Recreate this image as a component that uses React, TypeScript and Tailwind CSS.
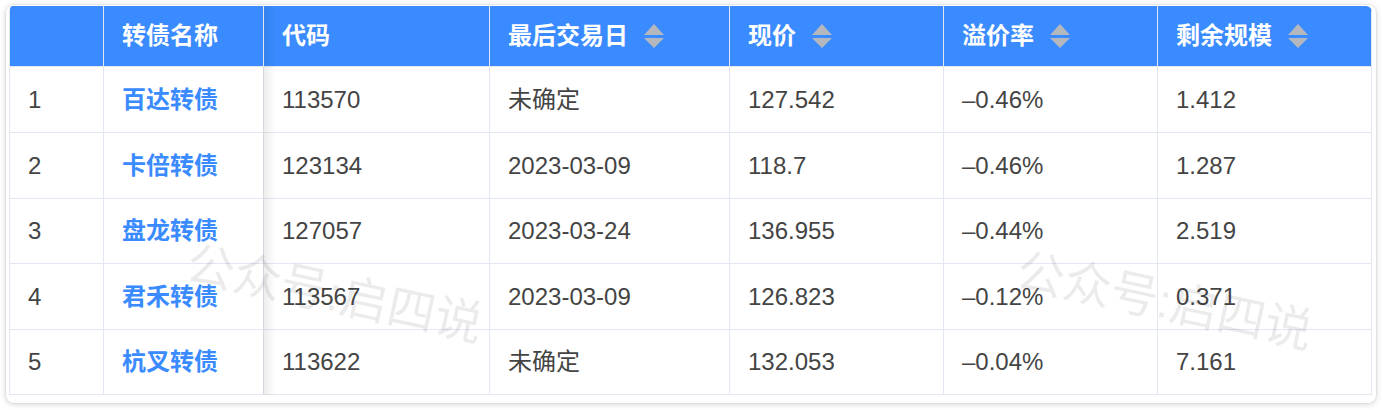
import React from "react";

const headers = [
  { label: "", sort: false },
  { label: "转债名称", sort: false },
  { label: "代码", sort: false },
  { label: "最后交易日", sort: true },
  { label: "现价", sort: true },
  { label: "溢价率", sort: true },
  { label: "剩余规模", sort: true },
];

const rows = [
  { name: "百达转债", code: "113570", last: "未确定", price: "127.542", premium: "–0.46%", size: "1.412", h: "h-[66px]" },
  { name: "卡倍转债", code: "123134", last: "2023-03-09", price: "118.7", premium: "–0.46%", size: "1.287", h: "h-[66px]" },
  { name: "盘龙转债", code: "127057", last: "2023-03-24", price: "136.955", premium: "–0.44%", size: "2.519", h: "h-[65px]" },
  { name: "君禾转债", code: "113567", last: "2023-03-09", price: "126.823", premium: "–0.12%", size: "0.371", h: "h-[66px]" },
  { name: "杭叉转债", code: "113622", last: "未确定", price: "132.053", premium: "–0.04%", size: "7.161", h: "h-[65px]" },
];

function SortIcon() {
  return (
    <svg width="20" height="24" viewBox="0 0 20 24" className="shrink-0">
      <polygon points="10,0 20,11 0,11" fill="#b4b7be" />
      <polygon points="0,14 20,14 10,24" fill="#b4b7be" />
    </svg>
  );
}

const cell = "flex items-center px-[18px] border-r border-b border-[#e3e7f1]";

export default function App() {
  return (
    <div className="relative h-[410px] w-[1382px] overflow-hidden bg-white font-['Liberation_Sans','Noto_Sans_CJK_SC',sans-serif]">
      <div className="ml-[6px] mt-[5px] w-[1370px] rounded-[8px] bg-white pl-[3px] pr-[4px] pt-px pb-[8px] shadow-[0_0_0_1px_rgba(0,0,0,0.04),0_1px_6px_rgba(0,0,0,0.18)]">
        <div className="relative overflow-hidden rounded-tl-[4px] rounded-tr-[6px] border-l border-[#e3e7f1]">
          <div className="grid grid-cols-[94px_160px_226px_240px_214px_214px_214px]">
            {headers.map((h, i) => (
              <div
                key={i}
                className={`${cell} h-[61px] gap-4 bg-[#3a8bff] text-[24px] font-bold text-white`}
              >
                <span>{h.label}</span>
                {h.sort && <SortIcon />}
              </div>
            ))}
            {rows.map((r, i) => (
              <React.Fragment key={i}>
                <div className={`${cell} ${r.h} text-[24px] text-[#444]`}>{i + 1}</div>
                <div className={`${cell} ${r.h} border-r-[#d3d6dd] text-[24px] font-semibold text-[#3a8bff]`}>
                  {r.name}
                </div>
                <div className={`${cell} ${r.h} text-[24px] text-[#444]`}>{r.code}</div>
                <div className={`${cell} ${r.h} text-[24px] text-[#444]`}>{r.last}</div>
                <div className={`${cell} ${r.h} text-[24px] text-[#444]`}>{r.price}</div>
                <div className={`${cell} ${r.h} text-[24px] text-[#444]`}>{r.premium}</div>
                <div className={`${cell} ${r.h} text-[24px] text-[#444]`}>{r.size}</div>
              </React.Fragment>
            ))}
          </div>
          {/* fixed column shadow */}
          <div className="pointer-events-none absolute top-0 bottom-0 left-[254px] w-[12px] bg-linear-to-r from-black/[0.07] to-transparent" />
        </div>
      </div>

      {/* watermarks */}
      <div className="pointer-events-none absolute left-[192px] top-[240px] origin-top-left rotate-[12deg] whitespace-nowrap text-[48px] leading-none text-black/[0.08]">
        公众号:启四说
      </div>
      <div className="pointer-events-none absolute left-[1022px] top-[247px] origin-top-left rotate-[12deg] whitespace-nowrap text-[48px] leading-none text-black/[0.08]">
        公众号:启四说
      </div>
    </div>
  );
}
